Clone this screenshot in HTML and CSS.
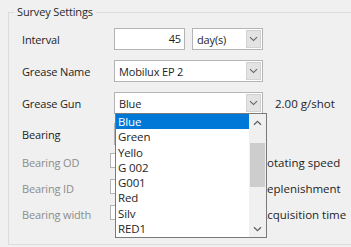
FILE: index.html
```html
<!DOCTYPE html>
<html>
<head>
<title>Survey Settings</title>
<link rel="stylesheet" href="styles.css">
</head>
<body>

<fieldset class="group">
    <legend class="group-title">Survey Settings</legend>

    <div class="row row-first">
        <div class="label">Interval</div>
        <div class="input input-short num">45</div>
        <div class="combo combo-short">
            <div class="combo-value">day(s)</div>
            <div class="combo-btn"><svg width="9" height="6" viewBox="0 0 9 6"><path d="M1 1.2 4.5 4.6 8 1.2" fill="none" stroke="#606060" stroke-width="1.1"/></svg></div>
        </div>
    </div>

    <div class="row">
        <div class="label">Grease Name</div>
        <div class="combo combo-wide">
            <div class="combo-value">Mobilux EP 2</div>
            <div class="combo-btn"><svg width="9" height="6" viewBox="0 0 9 6"><path d="M1 1.2 4.5 4.6 8 1.2" fill="none" stroke="#606060" stroke-width="1.1"/></svg></div>
        </div>
    </div>

    <div class="row">
        <div class="label">Grease Gun</div>
        <div class="combo combo-wide combo-open">
            <div class="combo-value">Blue</div>
            <div class="combo-btn"><svg width="9" height="6" viewBox="0 0 9 6"><path d="M1 1.2 4.5 4.6 8 1.2" fill="none" stroke="#606060" stroke-width="1.1"/></svg></div>

            <div class="dropdown">
                <ul class="dropdown-items">
                    <li class="selected">Blue</li>
                    <li>Green</li>
                    <li>Yello</li>
                    <li>G 002</li>
                    <li>G001</li>
                    <li>Red</li>
                    <li>Silv</li>
                    <li>RED1</li>
                </ul>
                <div class="scrollbar">
                    <div class="scroll-arrow"><svg width="9" height="6" viewBox="0 0 9 6"><path d="M1 4.8 4.5 1.4 8 4.8" fill="none" stroke="#606060" stroke-width="1.3"/></svg></div>
                    <div class="scroll-track"><div class="scroll-thumb"></div></div>
                    <div class="scroll-arrow"><svg width="9" height="6" viewBox="0 0 9 6"><path d="M1 1.2 4.5 4.6 8 1.2" fill="none" stroke="#606060" stroke-width="1.3"/></svg></div>
                </div>
            </div>
        </div>
        <div class="unit">2.00 g/shot</div>
    </div>

    <div class="row row-bearing">
        <div class="label">Bearing</div>
        <div class="combo combo-wide">
            <div class="combo-value"></div>
        </div>
    </div>

    <div class="row row-small row-od">
        <div class="label disabled">Bearing OD</div>
        <div class="input input-num"></div>
        <div class="unit">Rotating speed</div>
    </div>

    <div class="row row-small">
        <div class="label disabled">Bearing ID</div>
        <div class="input input-num"></div>
        <div class="unit">Replenishment</div>
    </div>

    <div class="row row-small">
        <div class="label disabled">Bearing width</div>
        <div class="input input-num"></div>
        <div class="unit">Acquisition time</div>
    </div>
</fieldset>

</body>
</html>
```

FILE: styles.css
```css
body {
    margin: 0;
    background-color: #f0f0f0;
    font-family: "Open Sans", "Noto Sans", sans-serif;
    font-size: 11px;
    letter-spacing: -0.15px;
    color: #1e1e1e;
    overflow: hidden;
}
.group {
    margin: 5px 0 0 8px;
    padding: 0 0 20px 0;
    border: 1px solid #dcdcdc;
    border-right: none;
    min-width: 0;
}
.group-title {
    margin-left: 5px;
    padding: 0 3px;
    line-height: 14px;
    color: #2a2a2a;
}
.row {
    display: flex;
    align-items: center;
    height: 22px;
    margin-top: 10px;
    padding-left: 13px;
}
.row-first {
    margin-top: 9px;
}
.row-bearing {
    margin-top: 9px;
}
.row-small {
    height: 20px;
    margin-top: 6px;
}
.row-od {
    margin-top: 7px;
}
.label {
    width: 92px;
    flex-shrink: 0;
}
.label.disabled {
    color: #8c8c8c;
}
.input {
    background-color: #fff;
    border: 1px solid #b4b4b4;
    box-sizing: border-box;
}
.input-short {
    width: 71px;
    height: 22px;
    line-height: 20px;
}
.num {
    text-align: right;
    padding-right: 3px;
}
.input-num {
    width: 140px;
    height: 15px;
    margin-left: -4px;
    margin-top: -4px;
}
.combo {
    display: flex;
    align-items: center;
    height: 22px;
    box-sizing: border-box;
    background-color: #fff;
    border: 1px solid #b4b4b4;
}
.combo-short {
    width: 71px;
    margin-left: 7px;
}
.combo-wide {
    width: 149px;
}
.combo-open {
    position: relative;
}
.combo-value {
    flex: 1;
    padding-left: 4px;
    white-space: nowrap;
}
.combo-btn {
    width: 15px;
    height: 18px;
    margin-right: 1px;
    box-sizing: border-box;
    background-color: #e3e3e3;
    border: 1px solid #d2d2d2;
    display: flex;
    align-items: center;
    justify-content: center;
}
.unit {
    margin-left: 12px;
    white-space: nowrap;
    letter-spacing: 0;
    font-size: 11.5px;
}
.row-small .unit {
    margin-left: 10px;
}

/* open list of the grease gun combo */
.dropdown {
    position: absolute;
    top: 20px;
    left: 0;
    width: 152px;
    height: 125px;
    box-sizing: border-box;
    background-color: #fff;
    border: 1px solid #7a7a7a;
    display: flex;
    z-index: 2;
}
.dropdown-items {
    flex: 1;
    list-style: none;
    margin: 0;
    padding: 0;
    font-size: 11.5px;
}
.dropdown-items li {
    height: 15.3px;
    line-height: 15px;
    padding-left: 2px;
}
.dropdown-items li.selected {
    background-color: #0078d7;
    color: #fff;
}
.scrollbar {
    width: 17px;
    display: flex;
    flex-direction: column;
    background-color: #f0f0f0;
}
.scroll-arrow {
    height: 17px;
    display: flex;
    align-items: center;
    justify-content: center;
}
.scroll-track {
    flex: 1;
    padding-top: 12px;
}
.scroll-thumb {
    height: 44px;
    margin: 0 1px;
    background-color: #cdcdcd;
}
```
